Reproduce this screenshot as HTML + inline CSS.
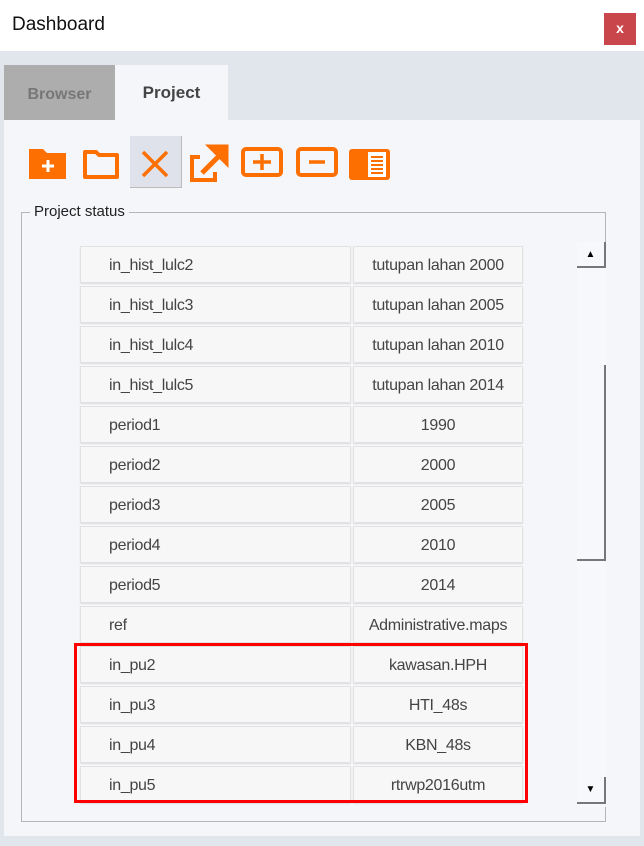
<!DOCTYPE html>
<html><head><style>
*{margin:0;padding:0;box-sizing:border-box}
body{width:644px;height:846px;background:#e1e5ec;font-family:"Liberation Sans",sans-serif;position:relative;overflow:hidden}
.a{position:absolute}
.title{left:0;top:0;width:644px;height:51px;background:#fff}
.row{left:80px;width:444px;height:40px}
.c1,.c2{position:absolute;top:1px;height:37px;background:#f7f7f7;border:1px solid #e2e2e2;box-shadow:0 1px 1px #ddd;color:#444;font-size:16px;line-height:37px;letter-spacing:-0.3px}
.c1{left:0;width:271px;padding-left:28px}
.c2{left:273px;width:170px;text-align:center}
</style></head><body>
<div class="a title"></div>
<div class="a" style="left:12px;top:14px;font-size:19px;color:#111">Dashboard</div>
<div class="a" style="left:604px;top:13px;width:32px;height:32px;background:#c9474a;color:#fff;font-size:14px;font-weight:bold;text-align:center;line-height:31px">x</div>
<div class="a" style="left:4px;top:65px;width:111px;height:56px;background:#adadad;color:#777;font-size:16px;font-weight:bold;text-align:center;line-height:60px">Browser</div>
<div class="a" style="left:115px;top:65px;width:113px;height:56px;background:#f4f6fa;color:#444;font-size:17px;font-weight:bold;text-align:center;line-height:56px">Project</div>
<div class="a" style="left:4px;top:120px;width:636px;height:716px;background:#f4f6fa"></div>
<div class="a" style="left:130px;top:136px;width:52px;height:52px;background:#dfe2ea;border-right:1px solid #bbb;border-bottom:1px solid #bbb"></div>
<svg class="a" style="left:0;top:130px" width="420" height="60">
<g fill="#fd6f00" stroke="#fd6f00">
<path d="M29 19h14l4 4h19v26H29z" stroke="none"/>
<path d="M42 36h12M48 30v12" stroke="#fff" stroke-width="3"/>
<path d="M85 22h11l3 3h18v22H85z" fill="none" stroke-width="4" stroke-linejoin="round"/>
<path d="M143 22l24 24M167 22l-24 24" stroke-width="3.5"/>
<path d="M200 27h-8v23h23v-8" fill="none" stroke-width="4"/>
<path d="M202 43l20-20M211 17h15v15z" stroke-width="5"/>
<rect x="243" y="19" width="38" height="26" rx="3" fill="none" stroke-width="4"/>
<path d="M253 32h18M262 24v16" stroke-width="3.5"/>
<rect x="298" y="19" width="38" height="26" rx="3" fill="none" stroke-width="4"/>
<path d="M309 32h16" stroke-width="3.5"/>
<rect x="349" y="19" width="41" height="31" rx="3" stroke="none"/>
<rect x="368" y="22" width="18" height="25" fill="#fff" stroke="none"/>
<path d="M371 27h12M371 31h12M371 35h12M371 39h12M371 43h12" stroke-width="2"/>
</g></svg>
<div class="a" style="left:21px;top:212px;width:585px;height:610px;border:1px solid #b5b5b5"></div>
<div class="a" style="left:30px;top:203px;background:#f4f6fa;padding:0 4px;font-size:15px;color:#222">Project status</div>
<div class="a row" style="top:245px"><div class="c1">in_hist_lulc2</div><div class="c2">tutupan lahan 2000</div></div>
<div class="a row" style="top:285px"><div class="c1">in_hist_lulc3</div><div class="c2">tutupan lahan 2005</div></div>
<div class="a row" style="top:325px"><div class="c1">in_hist_lulc4</div><div class="c2">tutupan lahan 2010</div></div>
<div class="a row" style="top:365px"><div class="c1">in_hist_lulc5</div><div class="c2">tutupan lahan 2014</div></div>
<div class="a row" style="top:405px"><div class="c1">period1</div><div class="c2">1990</div></div>
<div class="a row" style="top:445px"><div class="c1">period2</div><div class="c2">2000</div></div>
<div class="a row" style="top:485px"><div class="c1">period3</div><div class="c2">2005</div></div>
<div class="a row" style="top:525px"><div class="c1">period4</div><div class="c2">2010</div></div>
<div class="a row" style="top:565px"><div class="c1">period5</div><div class="c2">2014</div></div>
<div class="a row" style="top:605px"><div class="c1">ref</div><div class="c2">Administrative.maps</div></div>
<div class="a row" style="top:645px"><div class="c1">in_pu2</div><div class="c2">kawasan.HPH</div></div>
<div class="a row" style="top:685px"><div class="c1">in_pu3</div><div class="c2">HTI_48s</div></div>
<div class="a row" style="top:725px"><div class="c1">in_pu4</div><div class="c2">KBN_48s</div></div>
<div class="a row" style="top:765px"><div class="c1">in_pu5</div><div class="c2">rtrwp2016utm</div></div>
<div class="a" style="left:74px;top:643px;width:454px;height:160px;border:3px solid #f00"></div>
<div class="a" style="left:577px;top:242px;width:29px;height:565px;background:#f7f8fb"></div>
<div class="a" style="left:577px;top:242px;width:29px;height:26px;border-right:2px solid #777;border-bottom:2px solid #777;font-size:10px;text-align:center;line-height:26px">▲</div>
<div class="a" style="left:577px;top:365px;width:29px;height:196px;border-right:2px solid #777;border-bottom:2px solid #777"></div>
<div class="a" style="left:577px;top:777px;width:29px;height:27px;border-right:2px solid #777;border-bottom:2px solid #777;font-size:10px;text-align:center;line-height:26px">▼</div>
</body></html>
